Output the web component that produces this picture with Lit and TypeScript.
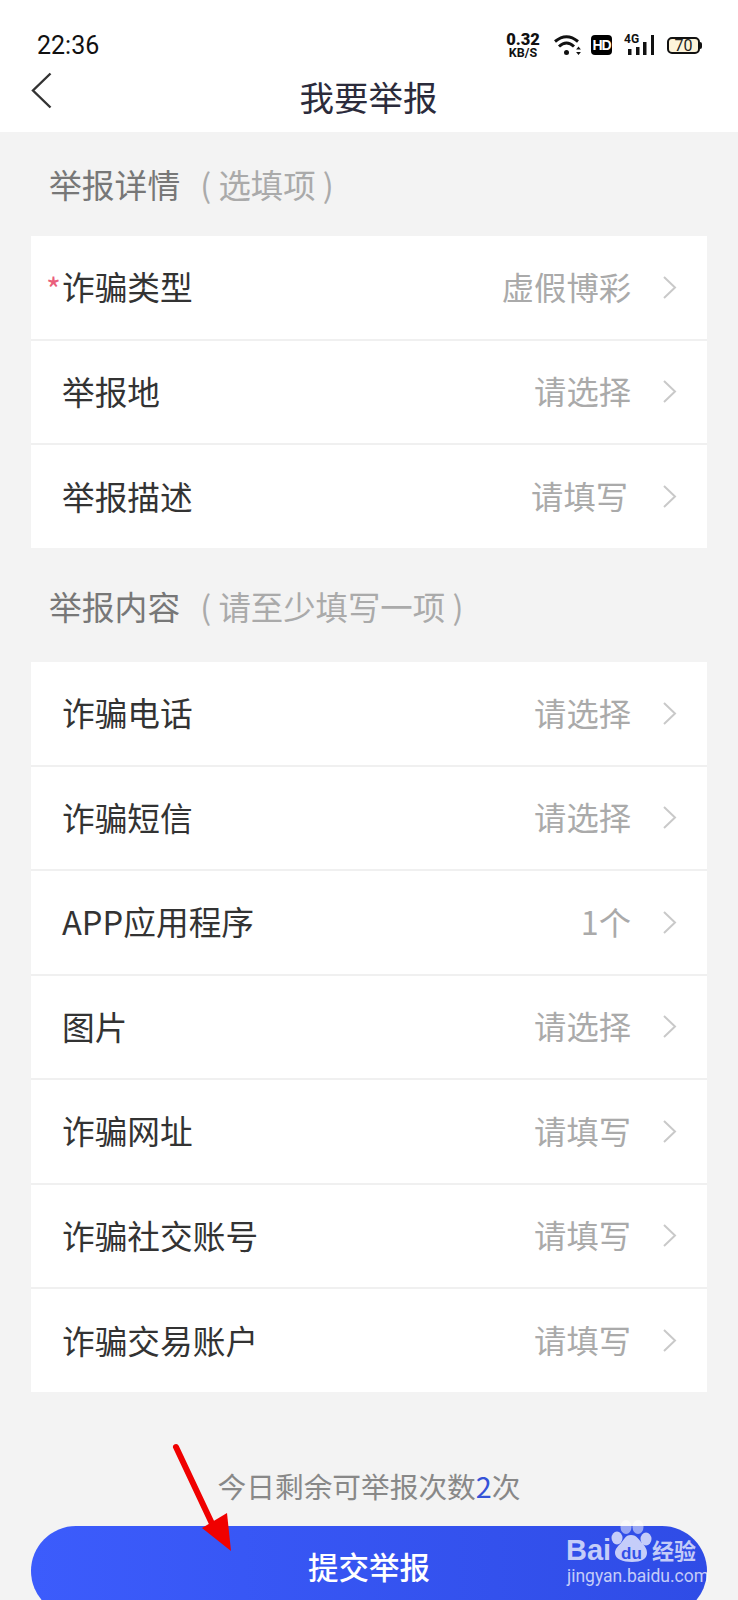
import { css, html, LitElement, svg } from "lit";
import { customElement } from "lit/decorators.js";

type Row = { label: string; value: string; required?: boolean; nudge?: boolean };

const DETAILS: Row[] = [
  { label: "诈骗类型", value: "虚假博彩", required: true },
  { label: "举报地", value: "请选择" },
  { label: "举报描述", value: "请填写", nudge: true },
];

const CONTENT: Row[] = [
  { label: "诈骗电话", value: "请选择" },
  { label: "诈骗短信", value: "请选择" },
  { label: "APP应用程序", value: "1个" },
  { label: "图片", value: "请选择" },
  { label: "诈骗网址", value: "请填写" },
  { label: "诈骗社交账号", value: "请填写" },
  { label: "诈骗交易账户", value: "请填写" },
];

const chevron = svg`<path d="M2 2l11 10.5L2 23" fill="none" stroke="#c9c9c9" stroke-width="2"/>`;

@customElement("app-root")
export class AppRootElement extends LitElement {
  static styles = css`
    :host {
      display: block;
      position: relative;
      width: 738px;
      height: 1600px;
      overflow: hidden;
      background: #f3f3f3;
      font-family: "Noto Sans CJK SC", "Noto Sans", sans-serif;
    }

    .header {
      height: 132px;
      background: #fff;
      box-sizing: border-box;
      padding: 31px 36px 0 31px;
    }
    .status {
      display: flex;
      align-items: center;
      height: 28px;
    }
    .time {
      margin: 2px 0 0 6px;
      font: 25px/28px Roboto, sans-serif;
      color: #111;
    }
    .indicators {
      margin-left: auto;
      display: flex;
      align-items: center;
    }
    .speed {
      width: 34px;
      display: flex;
      flex-direction: column;
      align-items: center;
      font-family: Roboto, sans-serif;
      font-weight: 700;
      color: #111;
    }
    .speed b {
      font-size: 16.5px;
      line-height: 15px;
    }
    .speed small {
      font-size: 12.5px;
      line-height: 12px;
    }
    .wifi {
      margin-left: 14px;
    }
    .hd {
      margin-left: 10px;
      width: 21px;
      height: 20px;
      border-radius: 4px;
      background: #000;
      color: #fff;
      font: 700 14px/20px "Liberation Sans", sans-serif;
      text-align: center;
      letter-spacing: -1px;
    }
    .signal {
      margin-left: 12px;
      position: relative;
      width: 31px;
      height: 20px;
    }
    .signal span {
      position: absolute;
      left: 0;
      top: -2px;
      font: 700 12px/12px Roboto, sans-serif;
      color: #111;
    }
    .battery {
      margin-left: 12px;
      box-sizing: border-box;
      width: 33px;
      height: 17px;
      border: 2px solid #111;
      border-radius: 5px;
      background: #fdf4da;
      font: 16px/13px Roboto, sans-serif;
      text-align: center;
      color: #222;
    }
    .nub {
      width: 2px;
      height: 7px;
      background: #111;
      border-radius: 0 2px 2px 0;
    }

    .nav {
      position: relative;
      display: flex;
      justify-content: center;
      margin-top: 3px;
    }
    .back {
      position: absolute;
      left: 0;
      top: 10px;
    }
    .title {
      margin: 9px 0 0 4px;
      font-size: 34.5px;
      line-height: 50px;
      color: #2b2b3b;
    }

    .section {
      display: flex;
      align-items: center;
      padding-left: 49px;
      font-size: 32.8px;
      color: #777;
    }
    .section.first {
      height: 104px;
      padding-bottom: 2px;
      box-sizing: border-box;
    }
    .section.second {
      height: 114px;
    }
    .section span {
      margin-left: 20px;
      color: #aaa;
      font-size: 32.4px;
    }

    .card {
      margin: 0 31px;
      background: #fff;
    }
    .row {
      display: flex;
      align-items: center;
      box-sizing: border-box;
      height: 104.5px;
      padding: 0 30px 0 31px;
      border-bottom: 2px solid #f0f0f0;
      font-size: 32.7px;
      color: #333;
    }
    .row:last-child {
      border-bottom: 0;
      height: 103px;
    }
    .label {
      position: relative;
      margin-top: -3px;
    }
    .star {
      position: absolute;
      right: 100%;
      top: 3px;
      margin-right: 1px;
      color: #ea5f7c;
      font-size: 32px;
    }
    .value {
      margin-left: auto;
      margin-top: -3px;
      color: #aaa;
      font-size: 32.3px;
    }
    .value.nudge {
      margin-right: 3px;
    }
    .row svg {
      margin-left: 31px;
      flex: none;
    }

    .hint {
      margin-top: 70px;
      height: 50px;
      text-align: center;
      font-size: 28.7px;
      line-height: 48px;
      color: #888;
    }
    .hint em {
      font-style: normal;
      color: #3553d8;
    }

    .submit {
      margin: 14px 31px 0;
      height: 90px;
      border-radius: 45px;
      background: linear-gradient(90deg, #3c5cfc, #2f4ce6);
      color: #fff;
      font-size: 30.5px;
      font-weight: 500;
      line-height: 80px;
      text-align: center;
    }

    .arrow {
      position: absolute;
      left: 165px;
      top: 1440px;
    }

    .watermark {
      position: absolute;
      left: 565px;
      top: 1518px;
      width: 140px;
      height: 70px;
      color: rgba(255, 255, 255, 0.72);
    }
    .watermark svg {
      position: absolute;
      left: 0;
      top: 0;
    }
    .wm-bai {
      position: absolute;
      left: 1px;
      top: 15px;
      font: 700 29px/34px "Liberation Sans", sans-serif;
    }
    .wm-jy {
      position: absolute;
      left: 87px;
      top: 17px;
      font-size: 22px;
      line-height: 28px;
      font-weight: 700;
    }
    .wm-url {
      position: absolute;
      left: 2px;
      top: 47px;
      font: 17.5px/22px Roboto, sans-serif;
      white-space: nowrap;
    }
  `;

  private renderRow(row: Row) {
    return html`<div class="row">
      <div class="label">
        ${row.required ? html`<span class="star">*</span>` : null}${row.label}
      </div>
      <div class="value ${row.nudge ? "nudge" : ""}">${row.value}</div>
      <svg width="15" height="25" viewBox="0 0 15 25">${chevron}</svg>
    </div>`;
  }

  render() {
    return html`
      <div class="header">
        <div class="status">
          <div class="time">22:36</div>
          <div class="indicators">
            <div class="speed"><b>0.32</b><small>KB/S</small></div>
            <svg class="wifi" width="27" height="21" viewBox="0 0 27 21">
              <g fill="none" stroke="#111" stroke-width="3">
                <path d="M1 6.500Q12.500 -3 24 6.500" />
                <path d="M5 11.500Q12.500 4.500 20 11.500" />
              </g>
              <circle cx="12.500" cy="17.500" r="2.500" fill="#111" />
              <path d="M24.500 11.500l-2.400 3h4.800zM24.500 20l-2.400-3h4.800z" fill="#111" />
            </svg>
            <div class="hd">HD</div>
            <div class="signal">
              <span>4G</span>
              <svg width="31" height="20" viewBox="0 0 31 20">
                <g fill="#111">
                  <rect x="4" y="14" width="3.500" height="6" />
                  <rect x="12" y="12" width="3.500" height="8" />
                  <rect x="19" y="7" width="3.500" height="13" />
                  <rect x="27" y="0" width="3" height="20" />
                </g>
              </svg>
            </div>
            <div class="battery">70</div>
            <div class="nub"></div>
          </div>
        </div>
        <div class="nav">
          <svg class="back" width="22" height="38" viewBox="0 0 22 38">
            <path d="M19.500 1.500L2 18.500l17.500 17" fill="none" stroke="#333" stroke-width="2.400" />
          </svg>
          <div class="title">我要举报</div>
        </div>
      </div>

      <div class="section first">举报详情<span>( 选填项 )</span></div>
      <div class="card">${DETAILS.map((r) => this.renderRow(r))}</div>

      <div class="section second">举报内容<span>( 请至少填写一项 )</span></div>
      <div class="card">${CONTENT.map((r) => this.renderRow(r))}</div>

      <div class="hint">今日剩余可举报次数<em>2</em>次</div>
      <div class="submit">提交举报</div>

      <svg class="arrow" width="80" height="120" viewBox="0 0 80 120">
        <path d="M11 7L50 90" stroke="#f00000" stroke-width="6" stroke-linecap="round" />
        <path d="M37 88L62 73L66 111Z" fill="#f00000" />
      </svg>

      <div class="watermark">
        <svg width="140" height="70" viewBox="0 0 140 70">
          <g fill="currentColor">
            <ellipse cx="61" cy="9" rx="5.500" ry="7" opacity="0.7" />
            <ellipse cx="73" cy="9" rx="5.500" ry="7" opacity="0.7" />
            <ellipse cx="52" cy="20" rx="5.500" ry="6.500" />
            <ellipse cx="81" cy="21" rx="5.500" ry="6.500" />
            <path d="M66 17c6 0 8 5 11 8 4 4 5 7 5 10 0 6-6 9-15 9s-17-3-17-9c0-4 3-7 6-10 3-3 4-8 10-8z" />
          </g>
          <text x="66.500" y="41" text-anchor="middle" font-family="Liberation Sans" font-weight="700" font-size="17" fill="#3150e8">du</text>
        </svg>
        <div class="wm-bai">Bai</div>
        <div class="wm-jy">经验</div>
        <div class="wm-url">jingyan.baidu.com</div>
      </div>
    `;
  }
}

declare global {
  interface HTMLElementTagNameMap {
    "app-root": AppRootElement;
  }
}
